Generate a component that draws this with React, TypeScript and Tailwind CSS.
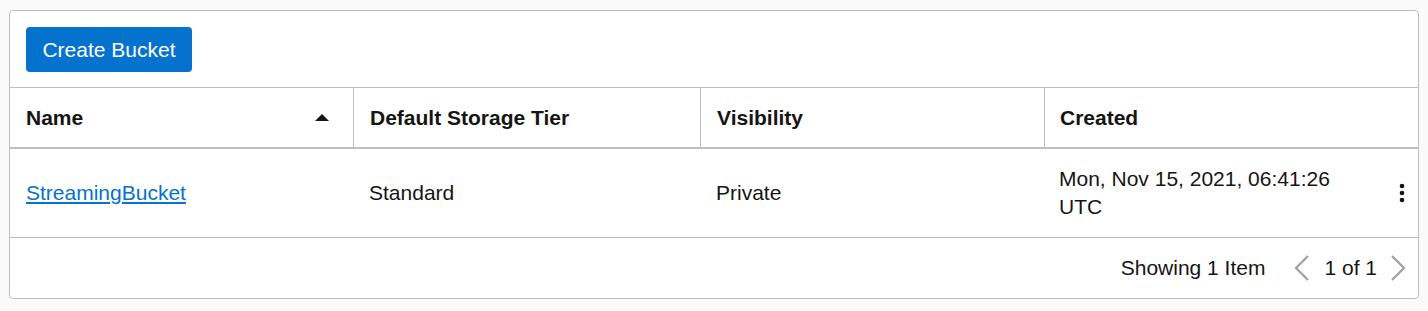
export default function App() {
  return (
    <div className="min-h-[311px] bg-[#fafafa] pt-[10px] pl-[9px] font-['Liberation_Sans',Arial,sans-serif] text-[21px] text-[#161513]">
      <div className="w-[1410px] rounded-[4px] border border-[#bcbec4] bg-white">
        <div className="px-4 pt-4 pb-[15px]">
          <button className="h-[45px] w-[166px] rounded-[4px] bg-[#0572ce] text-[21px] text-white">Create Bucket</button>
        </div>
        <div className="grid grid-cols-[343px_347px_344px_1fr] border-t border-b-2 border-[#bcbec4] h-[62px]">
          <div className="flex items-center justify-between pl-4 pr-[24px] font-bold">
            <span>Name</span>
            <svg width="14" height="7" viewBox="0 0 14 7"><path d="M0 7 L7 0 L14 7 Z" fill="#161513" /></svg>
          </div>
          <div className="flex items-center border-l border-[#bcbec4] pl-4 font-bold">Default Storage Tier</div>
          <div className="flex items-center border-l border-[#bcbec4] pl-4 font-bold">Visibility</div>
          <div className="flex items-center border-l border-[#bcbec4] pl-[15px] font-bold">Created</div>
        </div>
        <div className="grid grid-cols-[343px_347px_344px_1fr] h-[89px] border-b border-[#bcbec4]">
          <div className="flex items-center pl-4">
            <a href="#" className="text-[#0572ce] underline">StreamingBucket</a>
          </div>
          <div className="flex items-center pl-4">Standard</div>
          <div className="flex items-center pl-4">Private</div>
          <div className="flex items-center justify-between pl-[15px] pr-[13px]">
            <span className="leading-[28px]">Mon, Nov 15, 2021, 06:41:26<br />UTC</span>
            <svg width="6" height="20" viewBox="0 0 6 20">
              <circle cx="3" cy="3" r="2.3" fill="#161513" />
              <circle cx="3" cy="10" r="2.3" fill="#161513" />
              <circle cx="3" cy="17" r="2.3" fill="#161513" />
            </svg>
          </div>
        </div>
        <div className="flex h-[60px] items-center justify-end pr-[12px]">
          <span>Showing 1 Item</span>
          <svg className="ml-[29px]" width="15" height="26" viewBox="0 0 15 26">
            <path d="M14 1 L2 13 L14 25" fill="none" stroke="#a0a0a0" strokeWidth="2.2" />
          </svg>
          <span className="ml-[15px]">1 of 1</span>
          <svg className="ml-[14px]" width="15" height="26" viewBox="0 0 15 26">
            <path d="M1 1 L13 13 L1 25" fill="none" stroke="#a0a0a0" strokeWidth="2.2" />
          </svg>
        </div>
      </div>
    </div>
  );
}
